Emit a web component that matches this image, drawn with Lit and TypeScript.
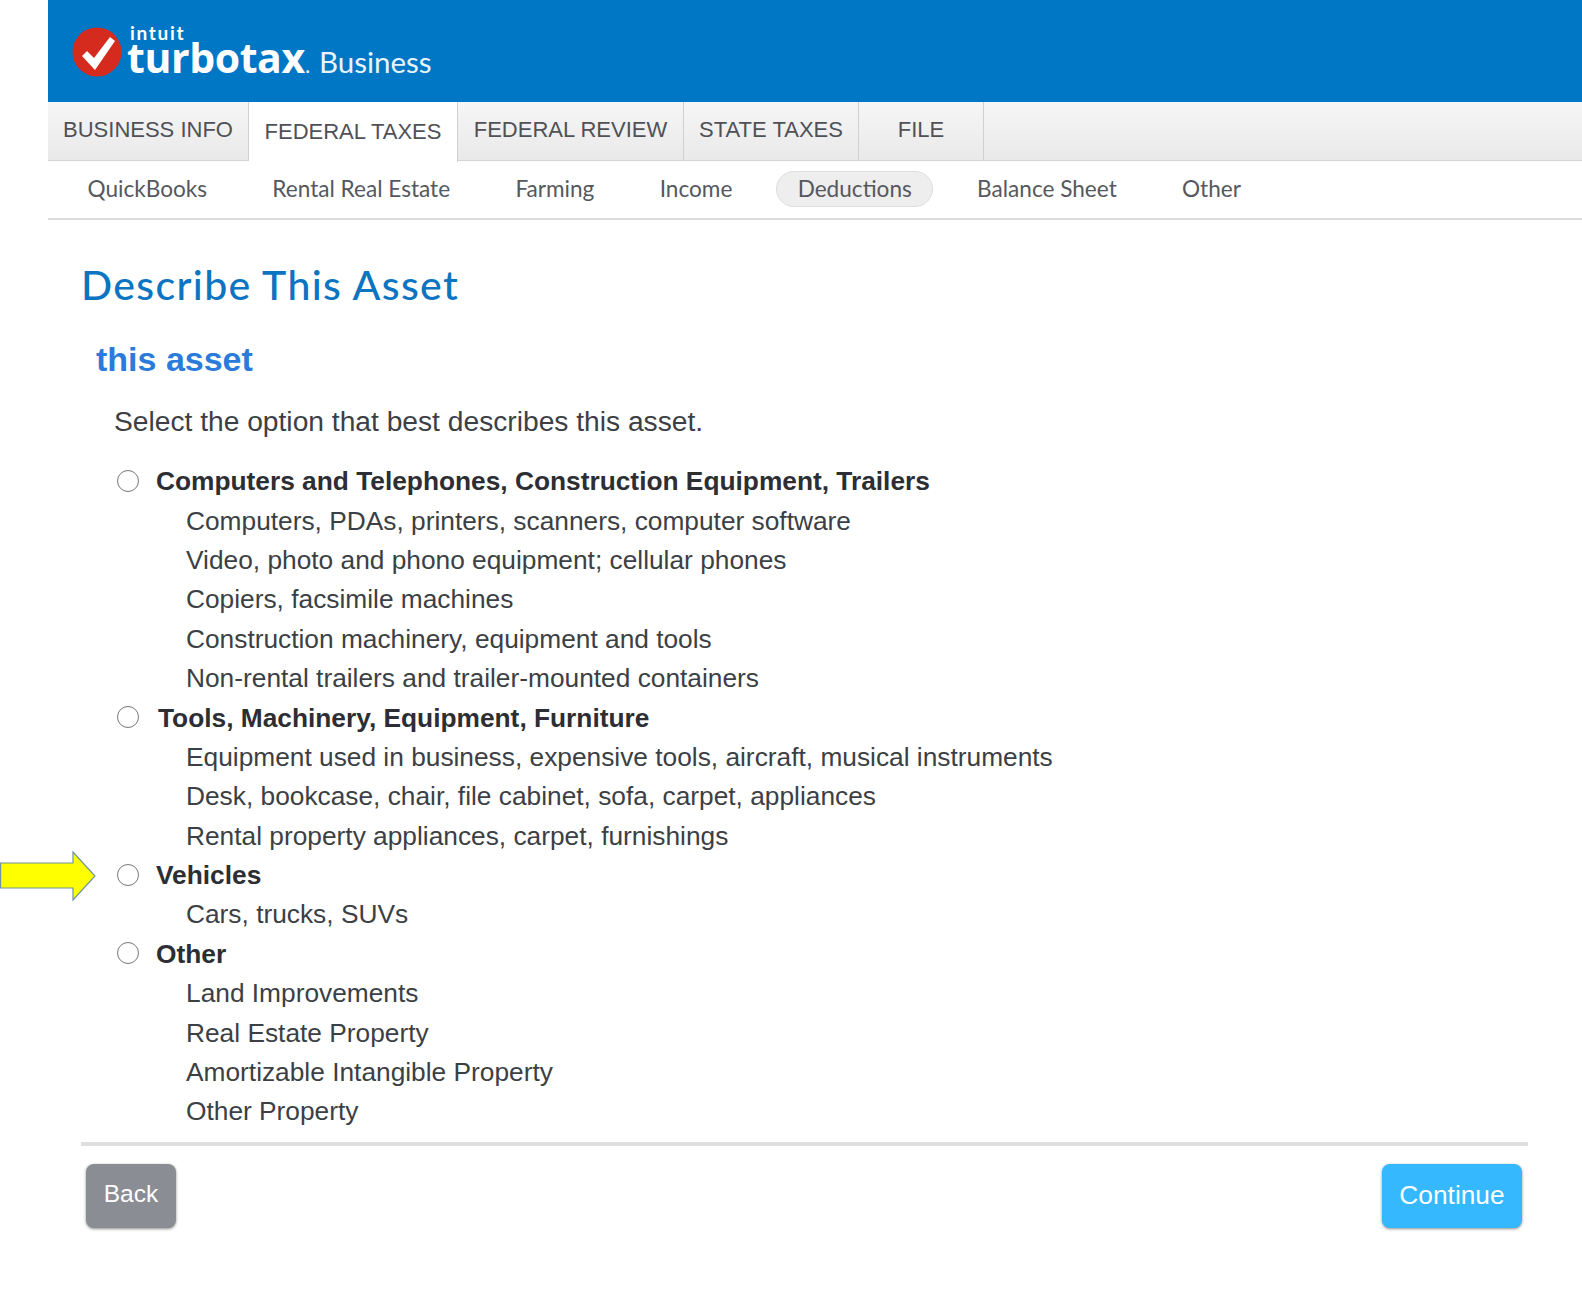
import { LitElement, html, css } from "lit";
import { customElement } from "lit/decorators.js";

const groups = [
  { title: "Computers and Telephones, Construction Equipment, Trailers", shift: false, items: ["Computers, PDAs, printers, scanners, computer software", "Video, photo and phono equipment; cellular phones", "Copiers, facsimile machines", "Construction machinery, equipment and tools", "Non-rental trailers and trailer-mounted containers"] },
  { title: "Tools, Machinery, Equipment, Furniture", shift: true, items: ["Equipment used in business, expensive tools, aircraft, musical instruments", "Desk, bookcase, chair, file cabinet, sofa, carpet, appliances", "Rental property appliances, carpet, furnishings"] },
  { title: "Vehicles", shift: false, arrow: true, items: ["Cars, trucks, SUVs"] },
  { title: "Other", shift: false, items: ["Land Improvements", "Real Estate Property", "Amortizable Intangible Property", "Other Property"] },
];
const tabs = [["BUSINESS INFO", 201], ["FEDERAL TAXES", 209], ["FEDERAL REVIEW", 226], ["STATE TAXES", 175], ["FILE", 125]] as const;
const subs = ["QuickBooks", "Rental Real Estate", "Farming", "Income", "Deductions", "Balance Sheet", "Other"];

@customElement("app-root")
export class AppRoot extends LitElement {
  static styles = css`
    :host { display: block; height: 1293px; background: #fff; font-family: "Liberation Sans", Arial, sans-serif; color: #3c3f44; overflow: hidden; }
    .page { margin-left: 48px; }
    .hdr { height: 102px; background: #0077c5; display: flex; align-items: flex-start; padding-left: 24px; color: #fff; font-family: Lato, sans-serif; }
    .check { width: 50px; height: 50px; margin-top: 27px; flex: none; }
    .brand { margin-left: 5px; width: 193px; display: flex; flex-direction: column; }
    .intuit { font-size: 19px; font-weight: 700; line-height: 20px; margin-top: 23px; margin-left: 3px; letter-spacing: 1.7px; }
    .turbo { font-family: "Open Sans", sans-serif; font-size: 41px; font-weight: 700; line-height: 29px; letter-spacing: -0.4px; white-space: nowrap; }
    .turbo span { font-size: 22px; font-weight: 400; letter-spacing: 0; }
    .biz { font-size: 29.5px; margin-top: 45px; margin-left: -1px; line-height: 34px; color: #e8f4fb; }
    .tabs { height: 59px; display: flex; background: linear-gradient(#f6f6f6, #e9e9e9); border-bottom: 1px solid #d4d4d4; box-sizing: border-box; }
    .tab { box-sizing: border-box; height: 59px; display: flex; align-items: center; justify-content: center; font-size: 22px; border-right: 1px solid #d0d0d0; white-space: nowrap; color: #4f5157; padding-bottom: 3px; }
    .tab.on { background: #fff; height: 60px; padding-bottom: 0; }
    .subs { height: 59px; box-sizing: border-box; border-bottom: 2px solid #dcdcdc; display: flex; align-items: center; gap: 22.3px; padding: 0 0 2px 18px; font-family: Lato, sans-serif; font-size: 22.6px; color: #55585e; }
    .sub { padding: 0 20.5px; height: 36px; line-height: 33px; box-sizing: border-box; white-space: nowrap; border: 1px solid transparent; border-radius: 18px; }
    .sub.on { background: #eeeeee; border-color: #dddddd; }
    .main { padding: 0 54px 0 33px; }
    h1 { margin: 40px 0 0; font-family: Lato, sans-serif; font-weight: 500; font-size: 41px; line-height: 50px; color: #0c74c0; letter-spacing: 1.35px; }
    h2 { margin: 29px 0 0 15px; font-size: 34px; line-height: 40px; font-weight: 700; color: #2a7bdc; }
    .intro { margin: 22px 0 0 33px; font-size: 28.2px; line-height: 40px; }
    .list { margin: 21px 0 0; }
    .row { height: 39.4px; display: flex; align-items: center; font-size: 26.3px; white-space: nowrap; }
    .head { position: relative; font-weight: 700; color: #2c2e33; padding-left: 36px; }
    .radio { width: 22px; height: 22px; flex: none; box-sizing: border-box; border: 1.5px solid #777; border-radius: 50%; background: #fff; margin: 0 17px 2px 0; }
    .head.shift .radio { margin-right: 19px; }
    .item { padding-left: 105px; }
    .arrow { position: absolute; left: -81px; top: -5px; width: 96px; height: 50px; }
    hr { margin: 10px 0 0; border: 0; height: 4px; background: #dedede; }
    .btns { display: flex; justify-content: space-between; padding: 18px 6px 0 5px; }
    .btn { height: 64px; box-sizing: border-box; display: flex; align-items: center; justify-content: center; border-radius: 8px; color: #fff; box-shadow: 0 1px 3px rgba(0,0,0,.45); }
    .back { width: 90px; background: #8a8d94; font-size: 24.5px; padding-bottom: 3px; }
    .cont { width: 140px; background: #36b8ff; font-size: 26.3px; }
  `;

  render() {
    return html`
      <div class="page">
        <div class="hdr">
          <svg class="check" viewBox="0 0 50 50">
            <circle cx="25" cy="25" r="24.5" fill="#d52b1e" />
            <path d="M10 29 L15 24 L22 31 L38 10 L43 14 L23 43 Z" fill="#fff" />
          </svg>
          <div class="brand">
            <div class="intuit">intuit</div>
            <div class="turbo">turbotax<span>.</span></div>
          </div>
          <div class="biz">Business</div>
        </div>
        <div class="tabs">
          ${tabs.map(([t, w], i) => html`<div class="tab ${i === 1 ? "on" : ""}" style="width:${w}px">${t}</div>`)}
        </div>
        <div class="subs">
          ${subs.map((s) => html`<div class="sub ${s === "Deductions" ? "on" : ""}">${s}</div>`)}
        </div>
        <div class="main">
          <h1>Describe This Asset</h1>
          <h2>this asset</h2>
          <div class="intro">Select the option that best describes this asset.</div>
          <div class="list">
            ${groups.map((g) => html`
              <div class="row head ${g.shift ? "shift" : ""}">
                ${g.arrow ? html`<svg class="arrow" viewBox="0 0 96 50"><path d="M0.6 12 H73 V1 L95 25 L73 49 V37 H0.6 Z" fill="#ffff00" stroke="#6f94a0" stroke-width="1.2"/></svg>` : ""}
                <span class="radio"></span><span>${g.title}</span>
              </div>
              ${g.items.map((it) => html`<div class="row item">${it}</div>`)}
            `)}
          </div>
          <hr />
          <div class="btns">
            <div class="btn back">Back</div>
            <div class="btn cont">Continue</div>
          </div>
        </div>
      </div>
    `;
  }
}
